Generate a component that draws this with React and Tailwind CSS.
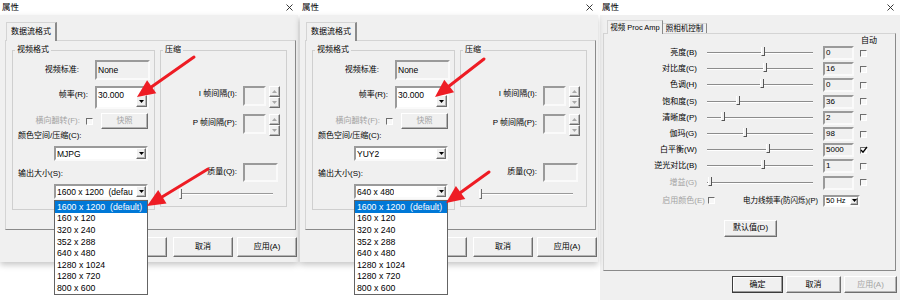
import React from "react";

const font = "font-['Liberation_Sans','Noto_Sans_CJK_SC',sans-serif]";
const sunken = "border-2 border-t-[#9a9a9a] border-l-[#9a9a9a] border-b-[#fafafa] border-r-[#fafafa]";
const raised = "border border-t-white border-l-white border-b-[#6e6e6e] border-r-[#6e6e6e] shadow-[inset_-1px_-1px_0_#b4b4b4]";
const checkBox = "w-[7px] h-[7px] shrink-0 border border-t-[#6d6d6d] border-l-[#6d6d6d] border-b-white border-r-white bg-[#f7f7f7]";

const SIZES = [
  "1600 x 1200  (default)",
  "160 x 120",
  "320 x 240",
  "352 x 288",
  "640 x 480",
  "1280 x 1024",
  "1280 x 720",
  "800 x 600",
];

const AMP = [
  { label: "亮度(B)", pos: 56, value: "0" },
  { label: "对比度(C)", pos: 58, value: "16" },
  { label: "色调(H)", pos: 55, value: "0" },
  { label: "饱和度(S)", pos: 31, value: "36" },
  { label: "清晰度(P)", pos: 16, value: "2" },
  { label: "伽玛(G)", pos: 38, value: "98" },
  { label: "白平衡(W)", pos: 61, value: "5000", auto: true },
  { label: "逆光对比(B)", pos: 56, value: "1" },
  { label: "增益(G)", pos: 3, value: "", disabled: true },
];

function CloseX() {
  return (
    <svg width="7" height="7" viewBox="0 0 7 7">
      <path d="M0.5 0.5L6.5 6.5M6.5 0.5L0.5 6.5" stroke="#222" strokeWidth="0.9" />
    </svg>
  );
}

function TitleBar({ pad }) {
  return (
    <div className={`h-[15px] bg-white flex items-center justify-between pl-[2px] ${pad} text-[8.5px] leading-none`}>
      <span>属性</span>
      <CloseX />
    </div>
  );
}

function Tri({ up, color = "#000" }) {
  return (
    <svg width="5" height="3" viewBox="0 0 5 3">
      <path d={up ? "M0 3h5L2.5 0z" : "M0 0h5L2.5 3z"} fill={color} />
    </svg>
  );
}

function DropBtn({ className }) {
  return (
    <div className={`flex items-center justify-center bg-[#f0f0f0] ${raised} ${className}`}>
      <Tri />
    </div>
  );
}

function Spin() {
  return (
    <div className="ml-[3px] w-[11px] h-[22px] flex flex-col">
      <div className={`flex-1 flex items-center justify-center bg-[#f0f0f0] ${raised}`}>
        <Tri up color="#a8a8a8" />
      </div>
      <div className={`flex-1 flex items-center justify-center bg-[#f0f0f0] ${raised}`}>
        <Tri color="#a8a8a8" />
      </div>
    </div>
  );
}

function Legend({ children }) {
  return <div className="-mt-[6px] ml-[2px] px-[2px] w-fit bg-[#f0f0f0] h-[10px]">{children}</div>;
}

function FormatDialog({ codec, size }) {
  return (
    <div className={`relative w-[298px] h-[300px] shrink-0 ${font} text-[8px] leading-[10px] text-black`}>
      <TitleBar pad="pr-[5px]" />
      <div className="h-[247px] bg-[#f0f0f0] shadow-[0_3px_6px_rgba(0,0,0,0.22)] flex flex-col">
        <div className="mt-[7px] pl-[6px] flex">
          <div className="relative z-10 -mb-px h-[19px] w-[51px] flex items-center justify-center bg-[#f0f0f0] border-t border-l border-r-2 border-t-[#d4d4d4] border-l-[#d4d4d4] border-r-[#8a8a8a]">
            数据流格式
          </div>
        </div>
        <div className="ml-[5px] w-[291px] h-[190px] border border-t-[#d4d4d4] border-l-[#d4d4d4] border-r-[#8a8a8a] border-b-[#8a8a8a] flex items-start pt-[9px] pl-[6px] gap-[5px]">
          <div className="w-[143px] h-[160px] border border-[#cfcfcf] flex flex-col">
            <Legend>视频格式</Legend>
            <div className="mt-[5px] h-[20px] flex items-center">
              <div className="w-[66px] text-right">视频标准:</div>
              <div className={`ml-[16px] w-[55px] h-[20px] flex items-center pl-[1px] text-[8.5px] ${sunken}`}>None</div>
            </div>
            <div className="mt-[6px] h-[23px] flex items-start">
              <div className="w-[75px] text-right mt-[4px]">帧率(R):</div>
              <div className={`ml-[7px] w-[54px] h-[23px] bg-white flex justify-between ${sunken}`}>
                <span className="pt-[2px] pl-[1px] text-[8.5px]">30.000</span>
                <DropBtn className="self-end w-[11px] h-[12px]" />
              </div>
            </div>
            <div className="mt-[4px] h-[16px] flex items-center">
              <div className="w-[67px] text-right text-[#a3a3a3]">横向翻转(F):</div>
              <div className={`ml-[6px] ${checkBox}`} />
              <div className={`ml-[8px] w-[47px] h-[16px] flex items-center justify-center text-[#a3a3a3] ${raised}`}>快照</div>
            </div>
            <div className="mt-[2px] ml-[5px]">颜色空间/压缩(C):</div>
            <div className={`mt-[5px] ml-[41px] w-[94px] h-[15px] bg-white flex items-center justify-between ${sunken}`}>
              <span className="pl-[1px] text-[8.5px]">{codec}</span>
              <DropBtn className="w-[10px] h-[11px]" />
            </div>
            <div className="mt-[8px] ml-[5px]">输出大小(S):</div>
            <div className={`mt-[5px] ml-[41px] w-[94px] h-[15px] bg-white flex items-center justify-between overflow-hidden ${sunken}`}>
              <span className="pl-[1px] text-[8.5px] whitespace-pre overflow-hidden">{size}</span>
              <DropBtn className="w-[10px] h-[11px] shrink-0" />
            </div>
          </div>
          <div className="w-[127px] h-[157px] border border-[#cfcfcf] flex flex-col">
            <Legend>压缩</Legend>
            <div className="mt-[31px] h-[22px] flex items-start">
              <div className="w-[76px] text-right mt-[3px]">I 帧间隔(I):</div>
              <div className={`ml-[6px] w-[23px] h-[20px] ${sunken}`} />
              <Spin />
            </div>
            <div className="mt-[6px] h-[22px] flex items-start">
              <div className="w-[76px] text-right mt-[4px]">P 帧间隔(P):</div>
              <div className={`ml-[6px] w-[23px] h-[20px] ${sunken}`} />
              <Spin />
            </div>
            <div className="mt-[27px] h-[19px] flex items-start">
              <div className="w-[76px] text-right mt-[4px]">质量(Q):</div>
              <div className={`ml-[6px] w-[35px] h-[19px] ${sunken}`} />
            </div>
            <div className="mt-[6px] ml-[18px] w-[94px] h-[11px] flex items-center">
              <div className="w-[3px] h-[10px] border-l border-r border-b border-l-white border-r-[#6d6d6d] border-b-[#6d6d6d]" />
              <div className="flex-1 h-[2px] border-t border-b border-t-[#9a9a9a] border-b-white" />
            </div>
          </div>
        </div>
        <div className="mt-[7px] h-[20px] flex justify-end pr-[1px] gap-[4px]">
          <div className={`w-[58px] mr-[2px] flex items-center justify-center ${raised}`}>确定</div>
          <div className={`w-[60px] flex items-center justify-center ${raised}`}>取消</div>
          <div className={`w-[60px] flex items-center justify-center ${raised}`}>应用(A)</div>
        </div>
      </div>
      <div className="absolute z-20 left-[54px] top-[200px] w-[94px] h-[95px] border border-[#646464] bg-white flex flex-col">
        {SIZES.map((s, i) => (
          <div
            key={s}
            className={`h-[11.6px] flex items-center pl-[2px] text-[8.75px] whitespace-pre ${
              i === 0 ? "bg-[#0078d7] text-white" : "text-black"
            }`}
          >
            {s}
          </div>
        ))}
      </div>
    </div>
  );
}

function AmpRow({ row }) {
  const dim = row.disabled ? "text-[#a3a3a3]" : "text-black";
  return (
    <div className="h-[16.2px] flex items-center">
      <div className={`w-[93px] text-right ${dim}`}>{row.label}</div>
      <div className="relative ml-[10px] w-[106px] h-[12px]">
        <div className="absolute left-0 right-0 top-[5px] h-[2px] border-t border-b border-t-[#8c8c8c] border-b-white" />
        <div
          className="absolute top-[0px] w-[4px] h-[9px] bg-[#f0f0f0] border-l border-r border-b border-l-white border-r-[#555] border-b-[#555]"
          style={{ left: row.pos - 2 }}
        />
      </div>
      <div className={`ml-[10px] w-[31px] h-[14px] flex items-center pl-[1px] text-[8px] ${sunken}`}>{row.value}</div>
      <div className={`ml-[6px] ${checkBox} relative`}>
        {row.auto && (
          <svg className="absolute -left-px -top-[2px]" width="8" height="8" viewBox="0 0 8 8">
            <path d="M1 4l2 2.2L7 1" stroke="#000" strokeWidth="1.3" fill="none" />
          </svg>
        )}
      </div>
    </div>
  );
}

function ProcAmpDialog() {
  return (
    <div className={`w-[300px] h-[300px] shrink-0 flex flex-col ${font} text-[8px] leading-[10px] text-black`}>
      <TitleBar pad="pr-[6px]" />
      <div className="flex-1 bg-[#f0f0f0] flex flex-col">
        <div className="mt-[5px] pl-[7px] flex items-end">
          <div className="relative z-10 -mb-px h-[14px] w-[56px] flex items-center justify-center bg-[#f0f0f0] border-t border-l border-r border-t-[#d4d4d4] border-l-[#d4d4d4] border-r-[#8a8a8a] text-[7.5px] whitespace-nowrap">
            视频 Proc Amp
          </div>
          <div className="h-[10px] w-[44px] flex items-center justify-center border-t border-r border-t-[#d4d4d4] border-r-[#8a8a8a] text-[7.5px] whitespace-nowrap">
            照相机控制
          </div>
        </div>
        <div className="ml-[3px] w-[293px] h-[238px] border border-t-[#d4d4d4] border-l-[#d4d4d4] border-r-[#8a8a8a] border-b-[#8a8a8a] flex flex-col">
          <div className="mt-[3px] ml-[257px] h-[8px] leading-[8px]">自动</div>
          {AMP.map((r) => (
            <AmpRow key={r.label} row={r} />
          ))}
          <div className="mt-[4px] h-[12px] flex items-center">
            <div className="w-[101px] text-right text-[#a3a3a3]">启用颜色(E)</div>
            <div className={`ml-[3px] ${checkBox}`} />
            <div className="ml-[28px] w-[80px] text-[7.5px] whitespace-nowrap">电力线频率(防闪烁)(P)</div>
            <div className={`w-[37px] h-[12px] bg-white flex items-center justify-between ${sunken}`}>
              <span className="pl-[1px] text-[7.5px]">50 Hz</span>
              <DropBtn className="w-[8px] h-[8px]" />
            </div>
          </div>
          <div className={`mt-[13px] ml-[120px] w-[53px] h-[17px] flex items-center justify-center ${raised}`}>默认值(D)</div>
        </div>
        <div className="mt-[5px] h-[17px] flex justify-end pr-[3px] gap-[3px]">
          <div className="w-[51px] flex items-center justify-center border border-[#3c3c3c] shadow-[inset_-1px_-1px_0_#9a9a9a,inset_1px_1px_0_#fff]">确定</div>
          <div className={`w-[55px] flex items-center justify-center ${raised}`}>取消</div>
          <div className={`w-[53px] flex items-center justify-center text-[#a3a3a3] ${raised}`}>应用(A)</div>
        </div>
      </div>
    </div>
  );
}

function Arrow({ from, base, head }) {
  return (
    <g>
      <line x1={from[0]} y1={from[1]} x2={base[0]} y2={base[1]} stroke="#ee1c24" strokeWidth="3" strokeLinecap="round" />
      <polygon points={head} fill="#ee1c24" />
    </g>
  );
}

export default function App() {
  return (
    <div className="relative w-[900px] h-[300px] bg-white flex gap-[2px] overflow-hidden">
      <FormatDialog codec="MJPG" size="1600 x 1200  (defau" />
      <FormatDialog codec="YUY2" size="640 x 480" />
      <ProcAmpDialog />
      <svg className="absolute left-0 top-0 z-30 pointer-events-none" width="900" height="300" viewBox="0 0 900 300">
        <Arrow from={[194, 57]} base={[151.7, 86.7]} head="137,97 156.3,93.3 147.1,80.2" />
        <Arrow from={[208, 169]} base={[162.4, 196.7]} head="147,206 166.5,203.5 158.2,189.9" />
        <Arrow from={[484, 59]} base={[449.2, 86]} head="435,97 454.1,92.3 444.3,79.7" />
        <Arrow from={[489, 172]} base={[460.6, 192.5]} head="446,203 465.3,199 455.9,186" />
      </svg>
    </div>
  );
}
